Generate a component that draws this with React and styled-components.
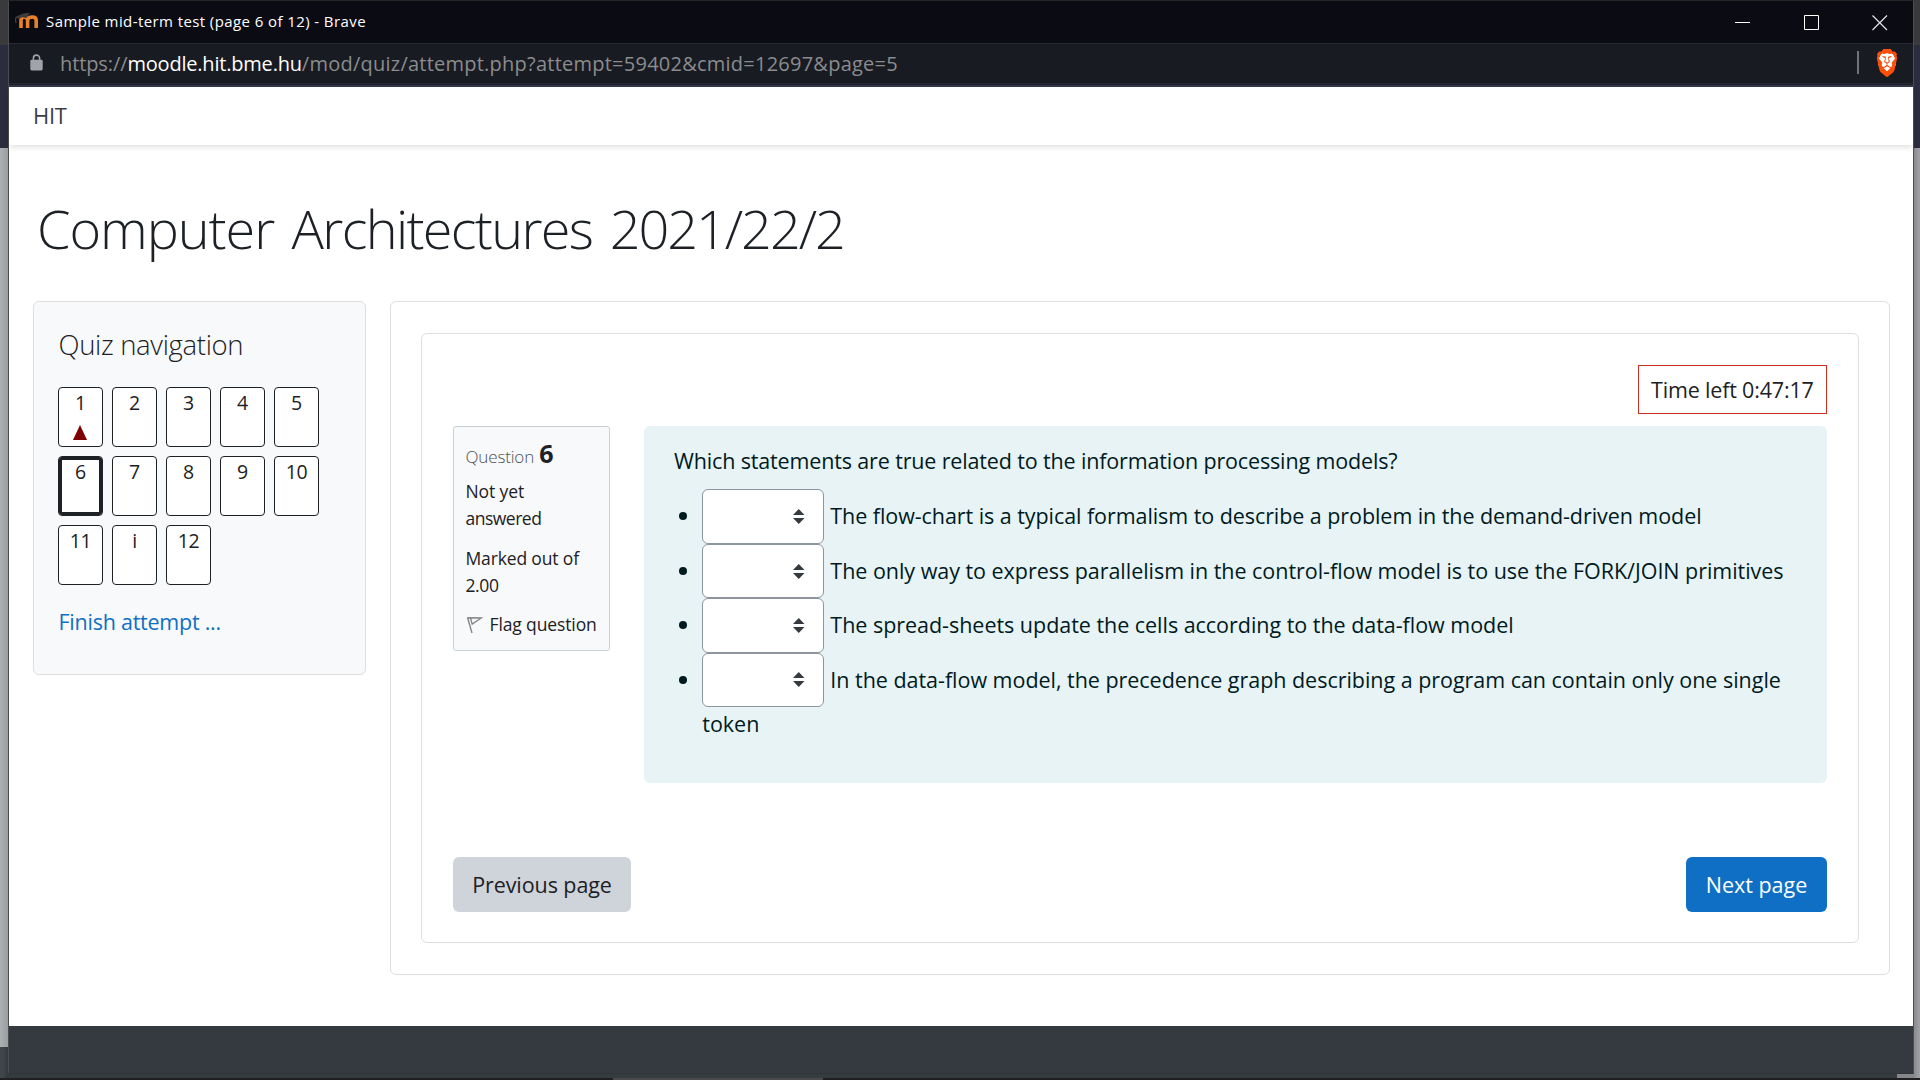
import React from 'react';
import styled, { createGlobalStyle } from 'styled-components';
import { SiBrave } from 'react-icons/si';

const GlobalStyle = createGlobalStyle`
  * { box-sizing: border-box; }
  body {
    margin: 0;
    overflow: hidden;
    font-family: "Open Sans", "Noto Sans", sans-serif;
    color: #1d2125;
  }
  h1, h2, h3, h4, p, ul { margin: 0; padding: 0; font-weight: inherit; }
`;

const Desktop = styled.div`
  display: flex;
  flex-direction: column;
  width: 1920px;
  height: 1080px;
  background:
    linear-gradient(90deg, #3f454b 0 3px, #33383d 8px, transparent 8px) 0 1047px / 1897px 31px no-repeat,
    linear-gradient(#353b3f, #353b3f) 8px 1073px / 1889px 5px no-repeat,
    linear-gradient(#3a3a3d 0 45px, #2b2d3e 45px 148px, transparent 148px),
    linear-gradient(90deg, #adb1b4, #9a9ea1 8px, #85858a 1913px, #a3a3a7);
`;

const Window = styled.div`
  display: flex;
  flex-direction: column;
  width: 1906px;
  height: 1074px;
  margin-left: 8px;
  border: 1px solid #4c4d50;
  border-top-color: #242427;
  border-bottom-color: #2f3437;
  background: #fff;
`;

const Taskbar = styled.div`
  height: 2px;
  margin-top: 4px;
  background: linear-gradient(90deg, #1f1f22 613px, #4a4a4c 613px 823px, #1f1f22 823px);
`;

const TitleBar = styled.div`
  display: flex;
  align-items: center;
  height: 42px;
  padding: 0 25px 2px 5px;
  background: #0b0b14;
  color: #fff;
`;

const WindowTitle = styled.div`
  flex: 1;
  margin-left: 7px;
  font-size: 15px;
  line-height: 20px;
  letter-spacing: 0.41px;
`;

const WindowControls = styled.div`
  display: flex;
  align-items: center;
  gap: 53px;
  margin-top: 4px;
`;

const AddressBar = styled.div`
  display: flex;
  align-items: center;
  height: 44px;
  padding: 0 14px 4px 21px;
  border-top: 1px solid #262832;
  border-bottom: 2px solid #35364a;
  background: linear-gradient(#181b22 39px, #262830 39px 40px, #20222a 40px);
`;

const Url = styled.div`
  flex: 1;
  display: flex;
  margin: 2px 0 0 17px;
  font-size: 20px;
  line-height: 30px;
  white-space: nowrap;
`;

const UrlPart = styled.span`
  color: ${p => (p.$strong ? '#fff' : '#8b8c8e')};
  letter-spacing: ${p => p.$track}px;
`;

const Divider = styled.div`
  width: 2px;
  height: 23px;
  margin-right: 16px;
  background: #707379;
`;

const BraveBadge = styled.div`
  display: flex;
  width: 24px;
  height: 28px;
  margin-top: 1px;
  color: #fb4f0a;
  background: radial-gradient(ellipse 9px 11px at 50% 48%, #fff 96%, transparent);
`;

const SiteNav = styled.nav`
  height: 58px;
  padding: 13px 24px;
  font-size: 22px;
  line-height: 30px;
  letter-spacing: -0.3px;
  color: #3b3f44;
  box-shadow: 0 2px 6px rgba(0, 0, 0, 0.13);
`;

const Page = styled.main`
  flex: 1;
  padding: 53px 23px 0 24px;
`;

const CourseTitle = styled.h1`
  padding-left: 4px;
  font-size: 54px;
  font-weight: 300;
  line-height: 60px;
  letter-spacing: -1.66px;
  word-spacing: 5px;
`;

const Columns = styled.div`
  display: flex;
  align-items: flex-start;
  gap: 24px;
  margin-top: 43px;
`;

const Card = styled.section`
  border: 1px solid #dedfe0;
  border-radius: 6px;
`;

const NavCard = styled(Card)`
  width: 333px;
  height: 374px;
  padding: 24px;
  background: #f8f9fb;
`;

const NavHeading = styled.h2`
  padding-left: 0.5px;
  font-size: 27.5px;
  font-weight: 300;
  line-height: 38px;
  letter-spacing: -0.32px;
`;

const NavGrid = styled.div`
  display: grid;
  grid-template-columns: repeat(5, 45px);
  grid-auto-rows: 60px;
  gap: 9px;
  margin-top: 23px;
`;

const NavButton = styled.div`
  display: flex;
  flex-direction: column;
  align-items: center;
  border: 1px solid #1d2125;
  border-radius: 4px;
  box-shadow: ${p => (p.$current ? 'inset 0 0 0 3px #1d2125' : 'none')};
  background: #fff;
  font-size: 19.5px;
  line-height: 30px;
  letter-spacing: -0.3px;
`;

const Triangle = styled.div`
  margin: 7px 1px 0 0;
  border: 7.5px solid transparent;
  border-top: 0;
  border-bottom: 15px solid #7f0000;
`;

const FinishLink = styled.a`
  display: block;
  margin-top: 20px;
  padding-left: 0.5px;
  font-size: 21.5px;
  line-height: 34px;
  letter-spacing: -0.24px;
  color: #0f6fc5;
`;

const MainCard = styled(Card)`
  width: 1500px;
  height: 674px;
  padding: 31px 30px;
`;

const QuizCard = styled(Card)`
  display: flex;
  flex-direction: column;
  height: 610px;
  padding: 31px;
`;

const Timer = styled.div`
  align-self: flex-end;
  width: 189px;
  height: 49px;
  padding: 7px 12px;
  border: 1px solid #ca3120;
  font-size: 21.5px;
  line-height: 34px;
  letter-spacing: -0.17px;
  white-space: nowrap;
`;

const Question = styled.div`
  display: flex;
  align-items: flex-start;
  justify-content: space-between;
  margin-top: 12px;
`;

const Info = styled.aside`
  width: 157px;
  height: 225px;
  padding: 16px 11px 0 11.5px;
  border: 1px solid #cad0d7;
  border-radius: 3px;
  background: #f8f9fa;
  font-size: 17.5px;
  line-height: 27px;
  white-space: nowrap;
`;

const InfoTitle = styled.h3`
  font-size: 17px;
  font-weight: 300;
  line-height: 28px;
  letter-spacing: -0.16px;
  color: #4d5257;
`;

const QuestionNumber = styled.span`
  margin-left: 1px;
  font-size: 25px;
  font-weight: 700;
  line-height: 20px;
  color: #1d2125;
`;

const InfoText = styled.p`
  margin-top: ${p => p.$gap}px;
`;

const Track = styled.span`
  letter-spacing: ${p => p.$value}px;
`;

const Flag = styled.p`
  display: flex;
  align-items: center;
  gap: 7px;
  margin-top: 12px;
  letter-spacing: -0.12px;
`;

const Formulation = styled.div`
  width: 1183px;
  height: 357px;
  padding: 18px 29px 0 30px;
  border-radius: 6px;
  background: #e7f3f5;
  color: #001a1e;
  font-size: 21.5px;
  line-height: 33.75px;
`;

const Prompt = styled.p`
  letter-spacing: -0.145px;
`;

const Choices = styled.ul`
  margin: 11.6px 0 0 5px;
  list-style: none;
`;

const Choice = styled.li`
  display: grid;
  grid-template-columns: 23.3px 1fr;
  letter-spacing: ${p => p.$track}px;
`;

const Bullet = styled.span`
  width: 8px;
  height: 8px;
  margin-top: 23px;
  border-radius: 50%;
  background: #001a1e;
`;

const Select = styled.span`
  display: inline-block;
  overflow: hidden;
  width: 122px;
  height: 54.4px;
  margin: 0 1px 0 -0.5px;
  padding: 18.8px 0 0 90px;
  border: 1px solid #8f959e;
  border-radius: 6px;
  background: #fff;
  vertical-align: -19.3px;
  line-height: 0;
`;

const Pager = styled.div`
  display: flex;
  justify-content: space-between;
  margin-top: 74px;
`;

const PageButton = styled.button`
  width: ${p => (p.$primary ? 141 : 178)}px;
  height: 55px;
  padding: 0;
  border: 0;
  border-radius: 6px;
  background: ${p => (p.$primary ? '#0f6fc5' : '#ced4da')};
  color: ${p => (p.$primary ? '#fff' : '#1d2125')};
  font: inherit;
  font-size: 21.5px;
  letter-spacing: ${p => (p.$primary ? 0 : -0.08)}px;
`;

const Footer = styled.footer`
  height: 47px;
  background: #353940;
`;

const MoodleIcon = () => (
  <svg width="25" height="18" viewBox="0 0 25 18">
    <path d="M7 16V8.5Q7 5 10.2 5Q13.6 5 13.6 8.5V16M13.6 8.5Q13.6 5 18.4 5Q22.2 5 22.2 8.5V16" fill="none" stroke="#e8822a" strokeWidth="3.6" />
    <path d="M1 5L10 1.2L16 1L12.5 6L8 5.2L5 7Z" fill="#3d3b3c" />
    <path d="M2 5.5Q1.2 8 2 11" fill="none" stroke="#6b4432" strokeWidth="1" />
  </svg>
);

const LockIcon = () => (
  <svg width="13" height="17" viewBox="0 0 13 17">
    <path d="M3.4 7V4.2a3.1 3.1 0 0 1 6.2 0V7" fill="none" stroke="#a0a2ac" strokeWidth="1.6" />
    <rect x="0.3" y="5.8" width="12.4" height="10.6" rx="1.4" fill="#a0a2ac" />
  </svg>
);

const MinimizeIcon = () => (
  <svg width="16" height="16" viewBox="0 0 16 16"><path d="M0 7.5H15" stroke="#fff" /></svg>
);
const MaximizeIcon = () => (
  <svg width="15" height="16" viewBox="0 0 15 16"><path d="M.5 .5H14.5V14.5H.5Z" fill="none" stroke="#fff" /></svg>
);
const CloseIcon = () => (
  <svg width="16" height="16" viewBox="0 0 16 16"><path d="M.5 .5L15 15M15 .5L.5 15" stroke="#e4e4e6" strokeWidth="1.2" /></svg>
);

const FlagIcon = () => (
  <svg width="17" height="18" viewBox="0 0 17 18">
    <path d="M1.5 1.5L6 17M1.5 1.8L15.2 2L6.2 8.2L4.4 2" fill="none" stroke="#85878a" strokeWidth="1.4" />
  </svg>
);

const ArrowsIcon = () => (
  <svg width="12" height="15" viewBox="0 0 12 15">
    <path d="M0 6L5.75 0L11.5 6ZM0 9H11.5L5.75 15Z" fill="#343a40" />
  </svg>
);

const PAGES = ['1', '2', '3', '4', '5', '6', '7', '8', '9', '10', '11', 'i', '12'];

const CHOICES = [
  { text: 'The flow-chart is a typical formalism to describe a problem in the demand-driven model', track: -0.065 },
  { text: 'The only way to express parallelism in the control-flow model is to use the FORK/JOIN primitives', track: -0.035 },
  { text: 'The spread-sheets update the cells according to the data-flow model', track: -0.03 },
  { text: 'In the data-flow model, the precedence graph describing a program can contain only one single token', track: -0.03 },
];

export default function App() {
  return (
    <Desktop>
      <GlobalStyle />
      <Window>
        <TitleBar>
          <MoodleIcon />
          <WindowTitle>Sample mid-term test (page 6 of 12) - Brave</WindowTitle>
          <WindowControls>
            <MinimizeIcon />
            <MaximizeIcon />
            <CloseIcon />
          </WindowControls>
        </TitleBar>
        <AddressBar>
          <LockIcon />
          <Url>
            <UrlPart $track={-0.1}>https://</UrlPart>
            <UrlPart $strong $track={-0.2}>moodle.hit.bme.hu</UrlPart>
            <UrlPart $track={0.24}>/mod/quiz/attempt.php?attempt=59402&amp;cmid=12697&amp;page=5</UrlPart>
          </Url>
          <Divider />
          <BraveBadge>
            <SiBrave size="100%" preserveAspectRatio="none" />
          </BraveBadge>
        </AddressBar>
        <SiteNav>HIT</SiteNav>
        <Page>
          <CourseTitle>
            <Track $value={-1.06}>Computer</Track> Architectures <Track $value={-2.05}>2021/22/2</Track>
          </CourseTitle>
          <Columns>
            <NavCard>
              <NavHeading>Quiz navigation</NavHeading>
              <NavGrid>
                {PAGES.map(n => (
                  <NavButton key={n} $current={n === '6'}>
                    {n}
                    {n === '1' && <Triangle />}
                  </NavButton>
                ))}
              </NavGrid>
              <FinishLink>Finish attempt ...</FinishLink>
            </NavCard>
            <MainCard>
              <QuizCard>
                <Timer>Time left 0:47:17</Timer>
                <Question>
                  <Info>
                    <InfoTitle>
                      Question <QuestionNumber>6</QuestionNumber>
                    </InfoTitle>
                    <InfoText $gap={7}>
                      <Track $value={-0.1}>Not yet</Track>
                      <br />
                      <Track $value={-0.5}>answered</Track>
                    </InfoText>
                    <InfoText $gap={13}>
                      <Track $value={-0.15}>Marked out of</Track>
                      <br />
                      <Track $value={-0.4}>2.00</Track>
                    </InfoText>
                    <Flag>
                      <FlagIcon />
                      Flag question
                    </Flag>
                  </Info>
                  <Formulation>
                    <Prompt>Which statements are true related to the information processing models?</Prompt>
                    <Choices>
                      {CHOICES.map(c => (
                        <Choice key={c.text} $track={c.track}>
                          <Bullet />
                          <div>
                            <Select><ArrowsIcon /></Select> {c.text}
                          </div>
                        </Choice>
                      ))}
                    </Choices>
                  </Formulation>
                </Question>
                <Pager>
                  <PageButton>Previous page</PageButton>
                  <PageButton $primary>Next page</PageButton>
                </Pager>
              </QuizCard>
            </MainCard>
          </Columns>
        </Page>
        <Footer />
      </Window>
      <Taskbar />
    </Desktop>
  );
}
